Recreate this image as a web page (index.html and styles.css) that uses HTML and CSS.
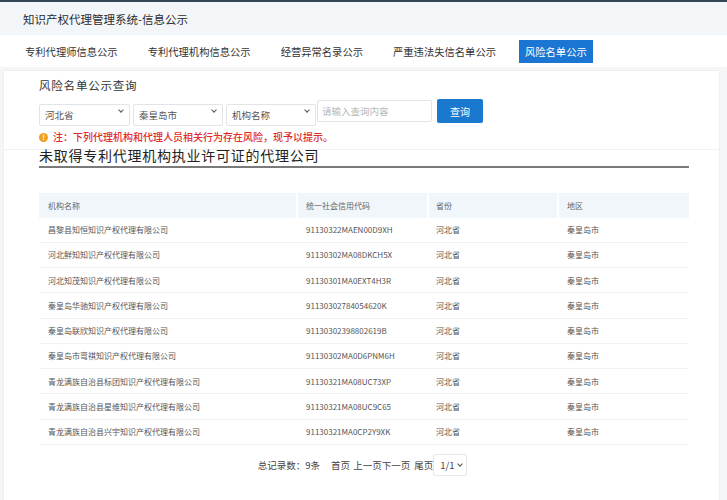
FILE: index.html
```html
<!DOCTYPE html>
<html lang="zh-CN">
<head>
    <meta charset="UTF-8">
    <meta name="viewport" content="width=device-width, initial-scale=1.0">
    <title>风险名单公示</title>
    <link rel="stylesheet" href="styles.css">
</head>
<body>
    <header class="topbar">知识产权代理管理系统-信息公示</header>
    <nav class="nav">
        <a class="nav-item">专利代理师信息公示</a>
        <a class="nav-item">专利代理机构信息公示</a>
        <a class="nav-item">经营异常名录公示</a>
        <a class="nav-item">严重违法失信名单公示</a>
        <a class="nav-item active">风险名单公示</a>
    </nav>

    <div class="panel">
        <div class="search-box">
            <h3 class="search-title">风险名单公示查询</h3>
            <div class="search-row">
                <div class="select-wrap w91">
                    <select><option>河北省</option></select>
                </div>
                <div class="select-wrap w90">
                    <select><option>秦皇岛市</option></select>
                </div>
                <div class="select-wrap w90">
                    <select><option>机构名称</option></select>
                </div>
                <input class="search-input" type="text" placeholder="请输入查询内容">
                <button class="btn">查询</button>
            </div>
            <p class="notice"><span class="notice-icon">!</span>注：下列代理机构和代理人员相关行为存在风险，现予以提示。</p>
        </div>

        <div class="content">
            <h2 class="list-title">未取得专利代理机构执业许可证的代理公司</h2>
            <table class="list">
                <thead>
                    <tr>
                        <th class="c1">机构名称</th>
                        <th class="c2">统一社会信用代码</th>
                        <th class="c3">省份</th>
                        <th class="c4">地区</th>
                    </tr>
                </thead>
                <tbody>
                    <tr><td>昌黎县知恒知识产权代理有限公司</td><td>91130322MAEN00D9XH</td><td>河北省</td><td>秦皇岛市</td></tr>
                    <tr><td>河北鲜知知识产权代理有限公司</td><td>91130302MA08DKCH5X</td><td>河北省</td><td>秦皇岛市</td></tr>
                    <tr><td>河北知茂知识产权代理有限公司</td><td>91130301MA0EXT4H3R</td><td>河北省</td><td>秦皇岛市</td></tr>
                    <tr><td>秦皇岛华驰知识产权代理有限公司</td><td>91130302784054620K</td><td>河北省</td><td>秦皇岛市</td></tr>
                    <tr><td>秦皇岛联欣知识产权代理有限公司</td><td>91130302398802619B</td><td>河北省</td><td>秦皇岛市</td></tr>
                    <tr><td>秦皇岛市弯祺知识产权代理有限公司</td><td>91130302MA0D6PNM6H</td><td>河北省</td><td>秦皇岛市</td></tr>
                    <tr><td>青龙满族自治县标团知识产权代理有限公司</td><td>91130321MA08UC73XP</td><td>河北省</td><td>秦皇岛市</td></tr>
                    <tr><td>青龙满族自治县星维知识产权代理有限公司</td><td>91130321MA08UC9C65</td><td>河北省</td><td>秦皇岛市</td></tr>
                    <tr><td>青龙满族自治县兴宇知识产权代理有限公司</td><td>91130321MA0CP2Y9XK</td><td>河北省</td><td>秦皇岛市</td></tr>
                </tbody>
            </table>

            <div class="pager">
                <span class="total">总记录数：9条</span>
                <a>首页</a>
                <a class="prev">上一页</a><a>下一页</a>
                <a class="last">尾页</a>
                <div class="select-wrap page-select">
                    <select><option>1/1</option></select>
                </div>
            </div>
        </div>
    </div>
</body>
</html>
```

FILE: styles.css
```css
body {
    margin: 0;
    background-color: #f5f6f8;
    font-family: "Noto Sans CJK SC", "Noto Sans", sans-serif;
    color: #333;
}
.topbar {
    height: 33px;
    border-top: 2px solid #34465a;
    background-color: #f3f6f9;
    display: flex;
    align-items: center;
    padding-left: 23px;
    font-size: 11.5px;
    color: #2b2b2b;
}
.nav {
    height: 32px;
    background-color: #fff;
    display: flex;
    align-items: center;
    gap: 16px;
    padding-left: 18px;
    margin-bottom: 3px;
}
.nav-item {
    font-size: 10.3px;
    color: #333;
    padding: 0 7px;
    height: 23px;
    line-height: 23px;
    cursor: pointer;
}
.nav-item.active {
    background-color: #1b76d3;
    color: #fff;
    padding: 0 6px;
}
.panel {
    margin: 0 7px 0 3px;
    background-color: #fff;
    border: 1px solid #eef0f2;
    padding-bottom: 40px;
}
.search-box {
    padding: 6px 0 4px 35px;
    border-bottom: 1px solid #f1f2f4;
}
.search-title {
    margin: 0;
    font-size: 11.5px;
    font-weight: normal;
    letter-spacing: 0.8px;
    line-height: 16px;
    color: #333;
}
.search-row {
    display: flex;
    align-items: center;
    margin-top: 6px;
}
.select-wrap {
    position: relative;
    height: 22px;
    margin-right: 3px;
}
.select-wrap::after {
    content: "";
    position: absolute;
    right: 7px;
    top: 8px;
    width: 3px;
    height: 3px;
    border-right: 1.2px solid #555;
    border-bottom: 1.2px solid #555;
    transform: rotate(45deg);
    pointer-events: none;
}
.select-wrap select {
    appearance: none;
    -webkit-appearance: none;
    width: 100%;
    height: 22px;
    border: 1px solid #e2e4e7;
    border-radius: 2px;
    background-color: #fff;
    padding: 0 0 0 5px;
    font-family: inherit;
    font-size: 9.5px;
    color: #555;
}
.w91 { width: 91px; }
.w90 { width: 90px; }
.search-row .select-wrap:nth-child(3) { margin-right: 1px; }
.search-input {
    width: 115px;
    height: 22px;
    box-sizing: border-box;
    border: 1px solid #e2e4e7;
    border-radius: 2px;
    padding: 0 4px;
    font-family: inherit;
    font-size: 9.5px;
    color: #555;
}
.search-input::placeholder {
    color: #b8b8b8;
}
.btn {
    margin-left: 5px;
    width: 46px;
    height: 24px;
    background-color: #1b78cf;
    color: #fff;
    border: none;
    border-radius: 2px;
    font-family: inherit;
    font-size: 10px;
    cursor: pointer;
}
.notice {
    margin: 6px 0 0;
    display: flex;
    align-items: center;
    font-size: 10px;
    line-height: 16px;
    color: #e02b2b;
    font-weight: 500;
}
.notice-icon {
    width: 9px;
    height: 9px;
    border-radius: 50%;
    background-color: #f0a01c;
    color: #fff;
    font-size: 7px;
    font-weight: bold;
    line-height: 9px;
    text-align: center;
    margin-right: 5px;
}
.content {
    padding-left: 35px;
}
.list-title {
    width: 650px;
    margin: -2px 0 0;
    font-size: 14px;
    font-weight: normal;
    letter-spacing: 0.75px;
    line-height: 15px;
    color: #222;
    border-bottom: 2.5px solid #7a7a7a;
    padding-bottom: 3px;
}
.list {
    width: 650px;
    margin-top: 25px;
    border-collapse: separate;
    border-spacing: 0;
    table-layout: fixed;
    font-size: 8px;
    color: #555;
}
.list th,
.list td {
    box-sizing: border-box;
    text-align: left;
    padding: 0 0 0 8px;
}
.list th {
    height: 24.5px;
    background-color: #f1f6fb;
    font-weight: normal;
    color: #666;
    border-right: 2px solid #fff;
}
.list th:last-child {
    border-right: none;
}
.list .c1 { width: 259px; }
.list .c2 { width: 131px; }
.list .c3 { width: 130px; }
.list td {
    height: 25.25px;
    border-bottom: 1px solid #f0f1f3;
}
.list th:first-child,
.list td:first-child { padding-left: 9px; }
.list th:nth-child(3),
.list td:nth-child(3) { padding-left: 7px; }
.pager {
    display: flex;
    align-items: center;
    justify-content: center;
    width: 650px;
    margin-top: 9px;
    font-size: 9.5px;
    color: #444;
}
.pager a {
    cursor: pointer;
}
.total {
    margin-right: 11px;
}
.prev {
    margin-left: 3px;
}
.last {
    margin-left: 4px;
}
.page-select {
    width: 34px;
    margin-left: 0;
}
.page-select select {
    padding-left: 6px;
    color: #444;
    border-color: #e6e7ea;
}
.page-select::after {
    right: 5px;
}
```
